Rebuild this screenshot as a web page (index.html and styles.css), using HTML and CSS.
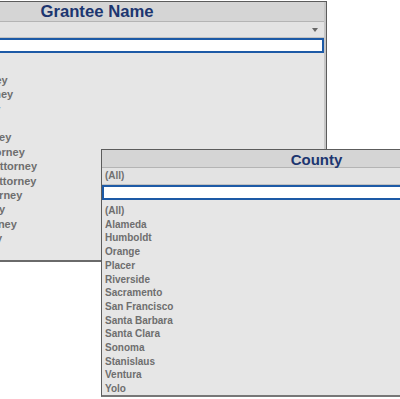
FILE: index.html
```html
<!DOCTYPE html>
<html lang="en">
<head>
    <meta charset="UTF-8">
    <meta name="viewport" content="width=device-width, initial-scale=1.0">
    <title>Filters</title>
    <link rel="stylesheet" href="styles.css">
</head>
<body>
    <div class="canvas">
        <!-- Фильтр: получатель гранта -->
        <div class="filter filter-grantee">
            <div class="filter-title">Grantee Name</div>
            <div class="filter-current"><span class="arrow"></span></div>
            <div class="filter-search"><input type="text" class="search-input"></div>
            <ul class="filter-list">
                <li>(All)</li>
                <li>Alameda District Attorney</li>
                <li>Humboldt District Attorney</li>
                <li>Orange District Attorney</li>
                <li>Placer District Attorney</li>
                <li>Riverside District Attorney</li>
                <li>Sacramento District Attorney</li>
                <li>San Francisco District Attorney</li>
                <li>Santa Barbara District Attorney</li>
                <li>Santa Clara District Attorney</li>
                <li>Sonoma District Attorney</li>
                <li>Stanislaus District Attorney</li>
                <li>Ventura District Attorney</li>
                <li>Yolo District Attorney</li>
            </ul>
        </div>

        <!-- Фильтр: округ -->
        <div class="filter filter-county">
            <div class="filter-title">County</div>
            <div class="filter-current">(All)</div>
            <div class="filter-search"><input type="text" class="search-input"></div>
            <ul class="filter-list">
                <li>(All)</li>
                <li>Alameda</li>
                <li>Humboldt</li>
                <li>Orange</li>
                <li>Placer</li>
                <li>Riverside</li>
                <li>Sacramento</li>
                <li>San Francisco</li>
                <li>Santa Barbara</li>
                <li>Santa Clara</li>
                <li>Sonoma</li>
                <li>Stanislaus</li>
                <li>Ventura</li>
                <li>Yolo</li>
            </ul>
        </div>
    </div>
</body>
</html>
```

FILE: styles.css
```css
html, body {
    margin: 0;
    padding: 0;
    background-color: #fff;
    overflow: hidden;
}
.canvas {
    position: relative;
    width: 400px;
    height: 399px;
    overflow: hidden;
    font-family: "Liberation Sans", Arial, sans-serif;
}
.filter {
    position: absolute;
    box-sizing: border-box;
    background-color: #e6e6e6;
    border: 1px solid #5c5c5c;
    overflow: hidden;
    display: flex;
    flex-direction: column;
}
.filter-title {
    background-color: #d5d5d5;
    color: #1c3670;
    font-weight: bold;
    text-align: center;
    border-bottom: 1px solid #b4b4b4;
}
.filter-current {
    position: relative;
    background-color: #e3e3e3;
    border-bottom: 1px solid #c2c2c2;
    color: #707070;
    font-weight: bold;
    box-sizing: border-box;
}
.filter-search {
    display: flex;
}
.search-input {
    flex: 1;
    margin: 0;
    padding: 0;
    border: 2px solid #1d5aa6;
    background-color: #fff;
    box-sizing: border-box;
    outline: none;
}
.filter-list {
    list-style: none;
    margin: 0;
    color: #6e6e6e;
    font-weight: bold;
    white-space: nowrap;
}

/* Grantee Name */
.filter-grantee {
    left: -131px;
    top: 1px;
    width: 458px;
    height: 261px;
    border-bottom-width: 2px;
    border-bottom-color: #6a6a6a;
    padding-right: 2px;
    background-color: #c6c6c6;
}
.filter-grantee .filter-title {
    height: 19px;
    font-size: 16.7px;
    line-height: 20px;
}
.filter-grantee .filter-current {
    height: 17px;
}
.filter-grantee .arrow {
    position: absolute;
    right: 6px;
    top: 6px;
    width: 0;
    height: 0;
    border-left: 3px solid transparent;
    border-right: 3px solid transparent;
    border-top: 4px solid #666;
}
.filter-grantee .search-input {
    height: 15px;
}
.filter-grantee .filter-list {
    flex: 1;
    background-color: #e6e6e6;
    padding: 5px 0 0 3px;
    font-size: 11px;
    line-height: 14.4px;
}

/* County */
.filter-county {
    left: 101px;
    top: 149px;
    width: 431px;
    height: 248px;
    border-bottom-width: 2px;
    border-bottom-color: #777;
}
.filter-county .filter-title {
    height: 17px;
    font-size: 15px;
    line-height: 19px;
}
.filter-county .filter-current {
    height: 17px;
    padding-left: 3px;
    font-size: 10px;
    line-height: 16px;
}
.filter-county .search-input {
    height: 15px;
}
.filter-county .filter-list {
    padding: 4px 0 0 3px;
    font-size: 10px;
    line-height: 13.7px;
}
```
